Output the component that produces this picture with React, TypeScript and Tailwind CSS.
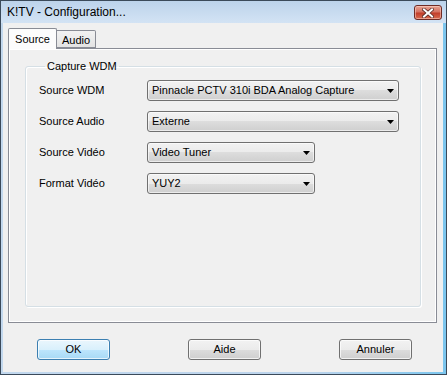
import React from "react";

const font = { fontFamily: '"Liberation Sans", Arial, sans-serif' };

function Arrow() {
  return (
    <svg width="7" height="4" viewBox="0 0 7 4" className="block">
      <polygon points="0,0 7,0 3.5,4" fill="#000" />
    </svg>
  );
}

function Combo({ text, w }: { text: string; w: string }) {
  return (
    <div
      className={`${w} h-[21px] border border-[#707070] rounded-[3px] bg-[linear-gradient(to_bottom,#f2f2f2_0%,#ebebeb_50%,#dddddd_50%,#cfcfcf_100%)] flex items-center justify-between pl-[4px] pr-[4px] text-[11px] text-black shadow-[inset_0_0_0_1px_rgba(255,255,255,0.6)]`}
    >
      <span className="leading-none whitespace-nowrap">{text}</span>
      <Arrow />
    </div>
  );
}

function Row({ label, value, w }: { label: string; value: string; w: string }) {
  return (
    <div className="flex items-center h-[21px]">
      <div className="w-[108px] text-[11px] text-black leading-none whitespace-nowrap">{label}</div>
      <Combo text={value} w={w} />
    </div>
  );
}

function Button({ label, def }: { label: string; def?: boolean }) {
  return (
    <div
      className={
        def
          ? "w-[73px] h-[21px] rounded-[3px] border border-[#3c7fb1] bg-[linear-gradient(to_bottom,#eaf6fd_0%,#d9f0fc_50%,#bee6fd_50%,#a7d9f5_100%)] shadow-[inset_0_0_0_1px_rgba(255,255,255,0.7)] flex items-center justify-center text-[11px] text-black"
          : "w-[73px] h-[21px] rounded-[3px] border border-[#707070] bg-[linear-gradient(to_bottom,#f2f2f2_0%,#ebebeb_50%,#dddddd_50%,#cfcfcf_100%)] shadow-[inset_0_0_0_1px_rgba(255,255,255,0.7)] flex items-center justify-center text-[11px] text-black"
      }
    >
      <span className="leading-none">{label}</span>
    </div>
  );
}

export default function App() {
  return (
    <div
      style={font}
      className="w-[447px] h-[375px] border border-[#3b4a5a] bg-[linear-gradient(to_right,#c2d8ee,#bcd4ec_70%,#7cc6ee)] flex flex-col overflow-hidden"
    >
      {/* Title bar */}
      <div className="h-[22px] flex items-center justify-between bg-[linear-gradient(to_bottom,#bcd3eb,#d3e3f4)] pl-[6px] pr-[4px]">
        <span className="text-[12px] text-black leading-none whitespace-nowrap">K!TV - Configuration...</span>
        <div className="w-[28px] h-[15px] mt-[1px] rounded-[3px] border border-[#6e2b25] bg-[linear-gradient(to_bottom,#e8a493_0%,#d47262_45%,#c23e2b_55%,#d76a50_100%)] shadow-[inset_0_0_0_1px_rgba(255,220,210,0.5)] flex items-center justify-center">
          <svg width="12" height="10" viewBox="0 0 12 10">
            <path d="M2 1.5 L10 8.5 M10 1.5 L2 8.5" stroke="#5a2a26" strokeWidth="3.6" strokeLinecap="square" />
            <path d="M2 1.5 L10 8.5 M10 1.5 L2 8.5" stroke="#ffffff" strokeWidth="2" strokeLinecap="square" />
          </svg>
        </div>
      </div>

      {/* Client */}
      <div className="flex-1 ml-[2px] mr-[3px] mb-[2px] bg-[#f0f0f0] flex flex-col pt-[5px]">
        {/* Tabs */}
        <div className="flex items-end h-[20px] pl-[5px] relative z-10">
          <div className="w-[49px] h-[21px] -mb-[1px] border border-[#898c95] border-b-0 bg-[#fcfcfc] rounded-t-[2px] flex items-start justify-center pt-[5px] text-[11px] text-black leading-none">
            Source
          </div>
          <div className="w-[39px] h-[18px] border border-[#898c95] border-l-0 bg-[linear-gradient(to_bottom,#f2f2f2,#e3e3e3)] rounded-tr-[2px] flex items-start justify-center pt-[4px] text-[11px] text-black leading-none">
            Audio
          </div>
        </div>

        {/* Panel */}
        <div className="ml-[5px] w-[429px] h-[275px] border border-[#898c95] bg-[#f0f0f0] shadow-[inset_1px_1px_0_0_#ffffff,inset_-1px_-1px_0_0_#ffffff] pt-[10px] pl-[16px] pr-[15px]">
          <fieldset className="h-[248px] border border-[#d5dfe5] rounded-[3px] shadow-[inset_1px_1px_0_0_#ffffff,1px_1px_0_0_#ffffff] pl-[13px] pt-[7px]">
            <legend className="ml-[6px] px-[2px] text-[11px] text-black leading-[14px]">Capture WDM</legend>
            <div className="flex flex-col gap-[10px]">
              <Row label="Source WDM" value="Pinnacle PCTV 310i BDA Analog Capture" w="w-[252px]" />
              <Row label="Source Audio" value="Externe" w="w-[252px]" />
              <Row label="Source Vidéo" value="Video Tuner" w="w-[168px]" />
              <Row label="Format Vidéo" value="YUY2" w="w-[168px]" />
            </div>
          </fieldset>
        </div>

        {/* Buttons */}
        <div className="mt-[16px] flex justify-between pl-[34px] pr-[31px]">
          <Button label="OK" def />
          <Button label="Aide" />
          <Button label="Annuler" />
        </div>
      </div>
    </div>
  );
}
